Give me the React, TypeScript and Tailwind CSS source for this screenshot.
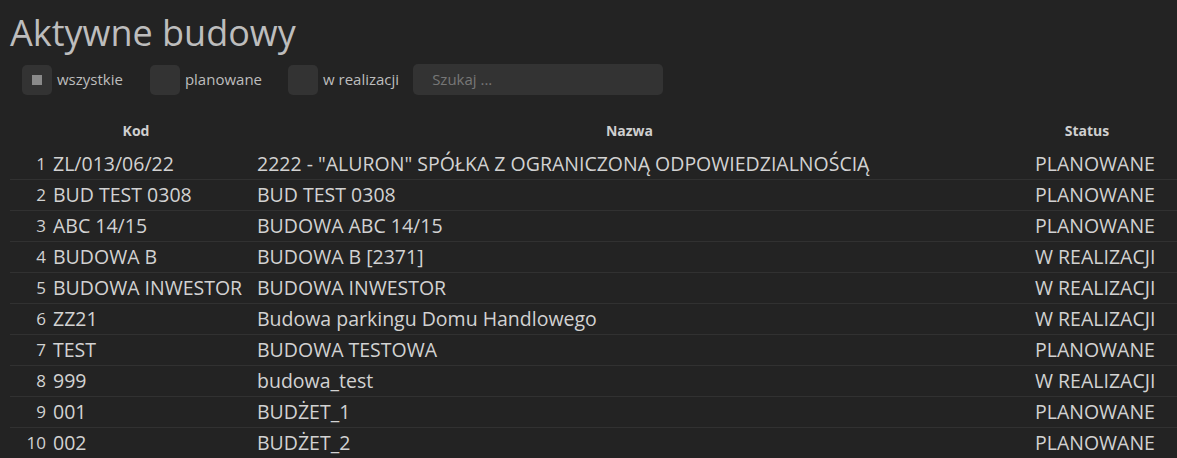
import React from "react";

const rows: [string, string, string][] = [
  ["ZL/013/06/22", '2222 - "ALURON" SPÓŁKA Z OGRANICZONĄ ODPOWIEDZIALNOŚCIĄ', "PLANOWANE"],
  ["BUD TEST 0308", "BUD TEST 0308", "PLANOWANE"],
  ["ABC 14/15", "BUDOWA ABC 14/15", "PLANOWANE"],
  ["BUDOWA B", "BUDOWA B [2371]", "W REALIZACJI"],
  ["BUDOWA INWESTOR", "BUDOWA INWESTOR", "W REALIZACJI"],
  ["ZZ21", "Budowa parkingu Domu Handlowego", "W REALIZACJI"],
  ["TEST", "BUDOWA TESTOWA", "PLANOWANE"],
  ["999", "budowa_test", "W REALIZACJI"],
  ["001", "BUDŻET_1", "PLANOWANE"],
  ["002", "BUDŻET_2", "PLANOWANE"],
];

function Check({ checked, label }: { checked?: boolean; label: string }) {
  return (
    <label className="flex items-center gap-[5px]">
      <span className="flex h-[30px] w-[30px] items-center justify-center rounded-[5px] bg-[#333333]">
        {checked && <span className="h-[10px] w-[10px] bg-[#8a8a8a]" />}
      </span>
      <span className="text-[15px] text-[#bdbdbd]">{label}</span>
    </label>
  );
}

export default function App() {
  return (
    <div
      className="h-[458px] w-[1177px] overflow-hidden bg-[#232323] pl-[10px] text-[#d2d2d2]"
      style={{ fontFamily: '"Open Sans", "Noto Sans", sans-serif' }}
    >
      <h1 className="pt-[9px] text-[36px] leading-[48px] text-[#bdbdbd]">Aktywne budowy</h1>
      <div className="mt-[7px] flex h-[31px] items-center pl-[12px]">
        <Check checked label="wszystkie" />
        <div className="w-[27px]" />
        <Check label="planowane" />
        <div className="w-[26px]" />
        <Check label="w realizacji" />
        <div className="w-[14px]" />
        <div className="flex h-[31px] w-[250px] items-center rounded-[5px] bg-[#333333] pl-[19px] text-[15px] text-[#777777]">
          Szukaj ...
        </div>
      </div>
      <div className="mt-[18px] grid grid-cols-[252px_735px_1fr] text-[14px] font-bold leading-[35px] text-[#cfcfcf]">
        <div className="text-center">Kod</div>
        <div className="text-center">Nazwa</div>
        <div className="text-center">Status</div>
      </div>
      {rows.map((r, i) => (
        <div
          key={i}
          className={`grid h-[31px] grid-cols-[247px_778px_1fr] items-center text-[19.5px] ${i > 0 ? "border-t border-[#313131]" : ""}`}
        >
          <div className="flex items-center whitespace-nowrap">
            <span className="w-[36px] text-right text-[17px]">{i + 1}</span>
            <span className="pl-[7px]">{r[0]}</span>
          </div>
          <div className="whitespace-nowrap">{r[1]}</div>
          <div className="whitespace-nowrap">{r[2]}</div>
        </div>
      ))}
    </div>
  );
}
